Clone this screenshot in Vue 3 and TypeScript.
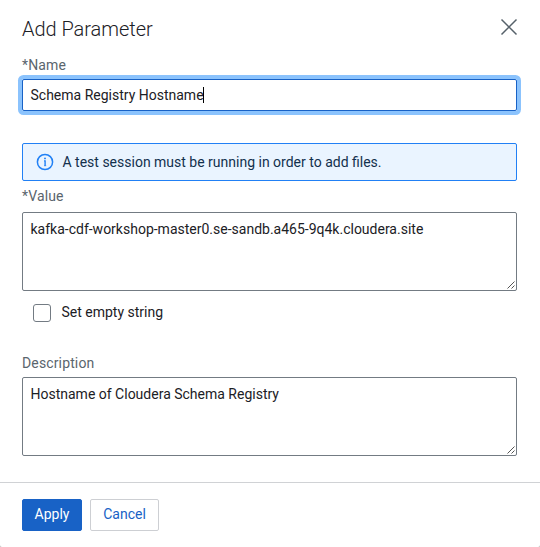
<script setup lang="ts">
import { ref } from 'vue'

const name = ref<string>('Schema Registry Hostname')
const value = ref<string>('kafka-cdf-workshop-master0.se-sandb.a465-9q4k.cloudera.site')
const description = ref<string>('Hostname of Cloudera Schema Registry')
const emptyString = ref<boolean>(false)
</script>

<template>
  <section class="modal">
    <header class="header">
      <h1>Add Parameter</h1>
      <button class="close" aria-label="Close">
        <svg width="18" height="18" viewBox="0 0 18 18"><path d="M1.5 1.5l15 15M16.5 1.5l-15 15" fill="none" stroke="#56616a" stroke-width="1.5" /></svg>
      </button>
    </header>
    <main class="body">
      <div class="label">*Name</div>
      <div class="field name">{{ name }}<span class="caret"></span></div>
      <div class="alert">
        <svg width="18" height="18" viewBox="0 0 18 18" fill="none" stroke="#2180f5" stroke-width="1.5">
          <circle cx="9" cy="9" r="7.6" />
          <path d="M8 7.9h1.1v4.9" stroke-width="1.4" />
          <path d="M8 12.7h2.2" stroke-width=".8" />
          <circle cx="9" cy="5.4" r=".95" fill="#2180f5" stroke="none" />
        </svg>
        <span>A test session must be running in order to add files.</span>
      </div>
      <div class="label value-label">*Value</div>
      <div class="field area">{{ value }}
        <svg class="grip" width="8" height="8" viewBox="0 0 8 8"><path d="M.5 7.5l7-7M4.5 7.5l3-3" stroke="#555" fill="none" /></svg>
      </div>
      <label class="check"><input v-model="emptyString" type="checkbox" /><span>Set empty string</span></label>
      <div class="label desc-label">Description</div>
      <div class="field area">{{ description }}
        <svg class="grip" width="8" height="8" viewBox="0 0 8 8"><path d="M.5 7.5l7-7M4.5 7.5l3-3" stroke="#555" fill="none" /></svg>
      </div>
    </main>
    <footer class="footer">
      <button class="btn primary">Apply</button>
      <button class="btn">Cancel</button>
    </footer>
  </section>
</template>

<style>
body { margin: 0; background: #b8b8b8; }
</style>

<style scoped>
.modal { box-sizing: border-box; width: 540px; height: 547px; display: flex; flex-direction: column; background: #fff; border-radius: 0 0 2px 2px; font-family: Roboto, sans-serif; font-size: 14px; line-height: 20px; color: #1b2025; overflow: hidden; }
.modal * { box-sizing: border-box; }
.header { display: flex; justify-content: space-between; height: 55px; padding: 15px 22px 0; }
h1 { margin: 0; font-size: 20px; line-height: 28px; font-weight: 300; letter-spacing: -.04px; color: #1b2025; }
.close { width: 18px; height: 18px; padding: 0; margin: 3px 0 0; border: 0; background: none; }
.close svg { display: block; }
.body { padding: 0 23px 0 22px; height: 427px; }
.label { height: 20px; letter-spacing: .14px; color: #5a656d; }
.field { border: 1px solid #737b83; border-radius: 2px; padding: 6px 8px 6px 7.5px; white-space: pre-wrap; }
.name { display: flex; align-items: center; height: 32px; margin-top: 4px; padding: 0 7.5px; border-color: #1862c6; box-shadow: 0 0 0 4px #8bc3fd; }
.caret { width: 1px; height: 16px; margin-left: -1px; background: #000; }
.alert { display: flex; align-items: center; gap: 8.5px; height: 38px; margin-top: 32px; padding: 0 13px; border: 1px solid #2180f5; border-radius: 2px; background: #eaf4ff; color: #12304d; }
.value-label { margin-top: 5px; }
.area { position: relative; height: 79px; margin-top: 6px; }
.grip { position: absolute; right: 1px; bottom: 1px; }
.check { display: flex; align-items: center; gap: 10.5px; height: 20px; margin: 12px 0 0 11px; }
.check span { padding-bottom: 2px; }
.check input { appearance: none; width: 18px; height: 18px; margin: 0; border: 1px solid #737b83; border-radius: 3px; background: #fff; }
.desc-label { margin-top: 30px; }
.desc-label + .area { margin-top: 4px; }
.footer { display: flex; gap: 8px; height: 65px; padding: 16px 22px; border-top: 1px solid #d0d2d5; }
.btn { height: 32px; width: 69px; padding: 0 0 2px; border: 1px solid #cdcfd3; border-radius: 2px; background: #fff; color: #1862c6; font: inherit; }
.primary { width: 60px; border-color: #1862c6; background: #1862c6; color: #fff; }
</style>
